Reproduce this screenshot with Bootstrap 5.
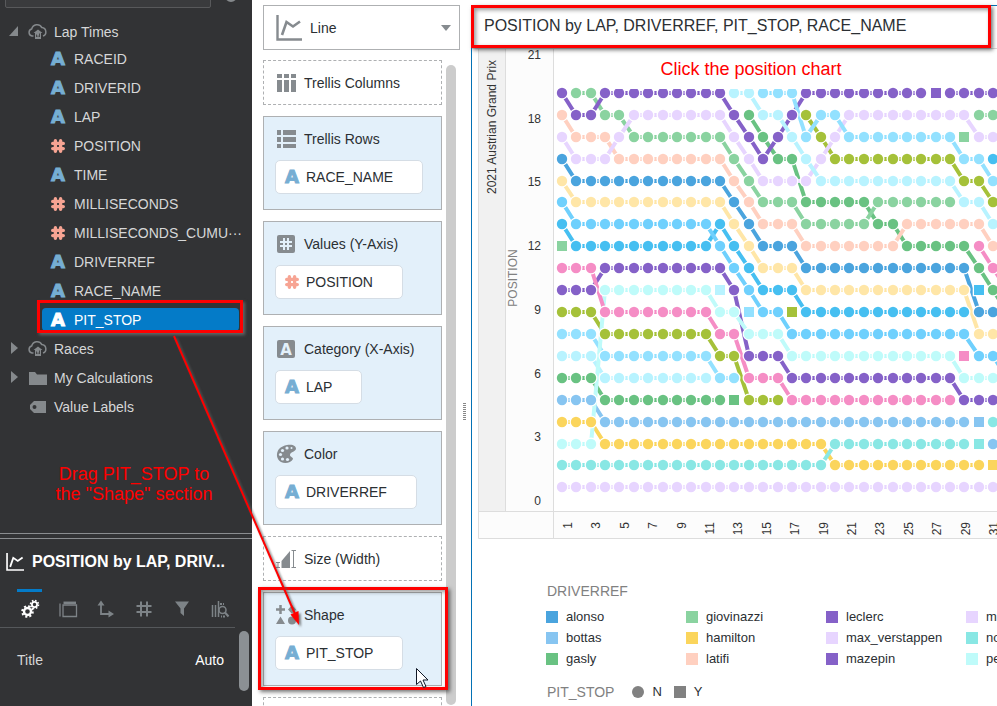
<!DOCTYPE html>
<html lang="en">
<head>
<meta charset="utf-8">
<meta name="viewport" content="width=device-width, initial-scale=1">
<title>POSITION by LAP</title>
<link href="https://cdn.jsdelivr.net/npm/bootstrap@5.3.0/dist/css/bootstrap.min.css" rel="stylesheet">
<style>
body{font-family:"Liberation Sans",Arial,sans-serif;font-size:14px;line-height:20px;color:#2b2f33;background:#fff}
.workbench{overflow:hidden}
.side{flex:0 0 252px;background:#323335;color:#d6d7d8}
.search-box{width:206px;height:32px;margin:-24px 0 11px 5px;background:#3a3b3d;border:1px solid #58595b;border-radius:2px;color:#ccc}
.search-mark{margin-left:14px}
.node{height:29px;width:100%;color:inherit;background:none;border:0;padding:0;text-align:left;white-space:nowrap}
.node-first{height:25px}
.node .twist{width:11px;height:13px;margin-left:9px;margin-right:8px}
.node .pic{width:20px;height:18px;margin-right:6px}
.leaf{padding-left:42px}
.leaf-body{width:197px;height:23px;padding-left:9px;border-radius:4px}
.leaf-body.picked{background:#047bc8;color:#fff}
.a-icon{font:bold 18px/18px "DejaVu Sans",sans-serif;color:#76aed3;width:14px;display:inline-block;flex-shrink:0;-webkit-text-stroke:1px currentColor}
.picked .a-icon{color:#fff}
.h-icon{width:14px;height:14px;color:#f7a493;flex-shrink:0}
.tag-gap{gap:9px}
.double-rule{height:6px;border-top:1px solid #8a8d90;border-bottom:1px solid #8a8d90}
.prop-title{font-size:16px;height:42px;color:#fff;padding:4px 0 0 6px;gap:8px}
.tabs{width:235px;height:47px;border-bottom:1px solid #55585b;padding-left:17px;gap:13px}
.tab-btn{width:25px;height:38px;background:none;border:0;border-top:3px solid transparent;padding:7px 0 0;color:#7d8387;margin-top:8px;display:flex;align-items:flex-start;justify-content:center}
.tab-btn.on{border-color:#047bc8;color:#fff}
.props{height:78px;padding:3px 3px 0 17px}
.prop-cell{padding-top:19px}
.side-bar{width:10px;height:60px;border-radius:5px;background:#8b9094;margin-left:15px}
.grammar{flex:0 0 211px;padding:5px 4px 0 11px}
.chart-type{height:45px;width:197px;border:1px solid #aeb0b2}
.chart-type svg{margin-left:12px;color:#868b8f}
.chart-type select{border:0;background:none;appearance:none;height:40px;padding-left:8px;color:#2b2f33}
.zone-area{margin-top:10px;gap:4px}
.zones{width:179px;gap:11px}
.zone{border:1px solid #aeb0b2;background:#e3f0fa;height:94px;padding:12px 0 0 11px;flex-shrink:0}
.zone-empty{border-style:dashed;background:#fff;height:45px}
.zone-head{height:20px;gap:8px;padding-left:1px;color:#2b2f33}
.zone-head svg{width:20px;height:20px;color:#868b8f}
.chip{height:34px;background:#fff;border:1px solid #d5dde5;border-radius:5px;margin-top:11px;padding:0 29px 0 9px;gap:7px;color:#2b2f33}
.mid-bar{width:10px;height:640px;border-radius:5px;background:#ccc;margin-top:5px}
.splitter{flex:0 0 8px;padding-top:117px}
.grip{width:3px;height:18px;margin-left:-1px;background:repeating-linear-gradient(#888 0 1px,transparent 1px 2px)}
.canvas{margin-top:5px;border-left:1px solid #0572b5;border-top:1px solid #0572b5;margin-left:-1px}
.canvas-head{height:43px;padding:0 0 2px 12px;border-bottom:1px solid #d8d8d8;font-size:16px;flex-shrink:0}
.plot{display:block;width:100%;height:492px;font-size:12px}
.legend{padding:40px 0 0 75px;font-size:13px;color:#2b2f33}
.legend-name{color:#818181;font-size:14px;margin:0 0 6px}
.keys{display:grid;grid-template-columns:repeat(4,140px);row-gap:1px;margin-left:-1px}
.swatch{width:12px;height:12px;margin-right:8px}
.shape-keys{margin-top:13px}
.shape-keys svg{width:12px;height:12px;margin:0 8px 0 12px}
.shape-keys .legend-name{margin:0 6px 0 0}
.note{position:absolute;color:#f00;font-size:18px;line-height:20px;text-align:center}
.frame{position:absolute;border:3px solid #f00;box-shadow:2px 2px 4px rgba(0,0,0,.55),inset 2px 2px 4px rgba(0,0,0,.4);pointer-events:none}
.frame-field{left:37px;top:300px;width:206px;height:33px;box-shadow:2px 2px 3px #666}
.frame-shape{left:258px;top:587px;width:190px;height:103px}
.frame-title{left:471px;top:5px;width:520px;height:43px}
.note-drag{left:54px;top:464px;width:160px}
.note-click{left:613px;top:49px;width:276px;height:40px;padding-top:10px;background:#fff}
.pointer-art{position:absolute;left:0;top:0;pointer-events:none}
.drag-line{filter:drop-shadow(2px 2px 1px rgba(90,90,90,.8))}
</style>
<script src="https://cdn.jsdelivr.net/npm/bootstrap@5.3.0/dist/js/bootstrap.bundle.min.js"></script>
</head>
<body>
<svg width="0" height="0" class="position-absolute" aria-hidden="true">
 <symbol id="hash" viewBox="0 0 14 14"><path d="M4.4 1.7V12.3M9.6 1.7V12.3M1.7 4.4H12.3M1.7 9.6H12.3" stroke="currentColor" stroke-width="3.4" stroke-linecap="round"/></symbol>
 <symbol id="cloud" viewBox="0 0 20 18"><path d="M5.5 13H4a3.6 3.6 0 0 1-.3-7A5.5 5.5 0 0 1 13.800 4.500A4.400 4.400 0 0 1 15 13" fill="none" stroke="#85898c" stroke-width="1.500"/><path d="M10 6.500L5.500 10H7V16H13V10H14.500Z" fill="#85898c"/><path d="M8.500 14V11.500M10 14V12.500M11.500 14V10.500" stroke="#323335" stroke-width=".8"/></symbol>
 <symbol id="linechart" viewBox="0 0 26 26"><path d="M1.500 0V24.500H26" fill="none" stroke="currentColor" stroke-width="2.400"/><path d="M6 20L10.500 7L17 11.500L24 6.500" fill="none" stroke="currentColor" stroke-width="2.600"/></symbol>
</svg>

<div class="workbench position-relative vh-100 d-flex">
 <aside class="side d-flex flex-column">
  <div class="flex-grow-1">
   <div class="d-flex"><input class="search-box" type="text" aria-label="Search">
    <svg class="search-mark" width="12" height="3" aria-hidden="true"><circle cx="6" cy="-4" r="5" fill="none" stroke="#85898c" stroke-width="2"/></svg></div>
   <div id="tree"></div>
  </div>
  <section>
   <div class="double-rule"></div>
   <h2 class="prop-title d-flex align-items-center fw-bold m-0"><svg width="18" height="18"><use href="#linechart"/></svg>POSITION by LAP, DRIV...</h2>
   <div class="tabs d-flex align-items-start">
    <button class="tab-btn on" aria-label="General"><svg width="20" height="20" viewBox="0 0 20 20" fill="none" stroke="currentColor"><circle cx="7.500" cy="12.500" r="3.500" stroke-width="2.400"/><circle cx="7.500" cy="12.500" r="5.300" stroke-width="2" stroke-dasharray="2.080 2.080"/><circle cx="14.500" cy="5.500" r="2.600" stroke-width="1.800"/><circle cx="14.500" cy="5.500" r="4" stroke-width="1.600" stroke-dasharray="1.570 1.570"/></svg></button>
    <button class="tab-btn" aria-label="Canvas"><svg width="20" height="20" viewBox="0 0 20 20" fill="none" stroke="currentColor" stroke-width="1.300"><path d="M5 6V17.500H18.500V6ZM2 4.500V17.500"/><path d="M5.500 3.800H18" stroke-width="2.500"/></svg></button>
    <button class="tab-btn" aria-label="Axis"><svg width="20" height="20" viewBox="0 0 20 20"><path d="M5 5V15H14" fill="none" stroke="currentColor" stroke-width="1.800"/><path d="M1.500 6.500L5 1.500L8.500 6.500ZM12.500 11.500L18 15L12.500 18.500Z" fill="currentColor"/></svg></button>
    <button class="tab-btn" aria-label="Values"><svg width="20" height="20" viewBox="0 0 20 20"><path d="M7 2.500V17.500M13 2.500V17.500M2.500 7H17.500M2.500 13H17.500" stroke="currentColor" stroke-width="2"/></svg></button>
    <button class="tab-btn" aria-label="Filters"><svg width="20" height="20" viewBox="0 0 20 20"><path d="M3 2.500H17L12 9.500V17L8.500 14V9.500Z" fill="currentColor"/></svg></button>
    <button class="tab-btn" aria-label="Analytics"><svg width="20" height="20" viewBox="0 0 20 20" fill="none" stroke="currentColor"><path d="M2.500 6V18M5.500 6V18M8.500 2V18" stroke-width="1.500"/><path d="M10 5H14M15 17.500H11" stroke-dasharray="2 1" stroke-width="2"/><circle cx="12.500" cy="11" r="3.500" stroke-width="1.500"/><path d="M15 13.500L18.500 17.500" stroke-width="2"/></svg></button>
   </div>
   <div class="props d-flex align-items-start">
    <span class="prop-cell flex-grow-1">Title</span><span class="prop-cell text-white">Auto</span><span class="side-bar"></span>
   </div>
  </section>
 </aside>

 <section class="grammar">
  <div class="chart-type d-flex align-items-center">
   <svg width="26" height="26"><use href="#linechart"/></svg>
   <select class="flex-grow-1" aria-label="Chart type"><option>Line</option></select>
   <svg width="10" height="6" class="me-2 pe-none"><path d="M0 0H10L5 6Z" fill="#868b8f"/></svg>
  </div>
  <div class="zone-area d-flex">
   <div class="zones d-flex flex-column" id="zones"></div>
   <div class="mid-bar"></div>
  </div>
 </section>
 <div class="splitter d-flex align-items-center"><span class="grip"></span></div>

 <main class="canvas flex-grow-1 d-flex flex-column overflow-hidden">
  <h1 class="canvas-head d-flex align-items-center m-0">POSITION by LAP, DRIVERREF, PIT_STOP, RACE_NAME</h1>
  <svg class="plot flex-shrink-0" id="plot" role="img" aria-label="Position by lap"></svg>
  <div class="legend">
   <p class="legend-name">DRIVERREF</p>
   <div class="keys" id="keys"></div>
   <div class="shape-keys d-flex align-items-center"><span class="legend-name">PIT_STOP</span>
    <svg><circle cx="6" cy="6" r="6" fill="#818181"/></svg>N
    <svg><path d="M0 0H12V12H0Z" fill="#818181"/></svg>Y</div>
  </div>
 </main>

 <div class="note note-click">Click the position chart</div>
 <div class="note note-drag">Drag PIT_STOP to<br>the "Shape" section</div>
 <div class="frame frame-field"></div><div class="frame frame-shape"></div><div class="frame frame-title"></div>
 <svg class="pointer-art" width="460" height="700" aria-hidden="true">
  <g class="drag-line"><path d="M174 336L295 614" stroke="#f00" stroke-width="2"/><path d="M299 625L290.500 614.500L298.500 611Z" fill="#f00"/></g>
  <path d="M416.500 668.500V684.500L420.500 681L423.500 687.500L426 686.500L423 680H428Z" fill="#fff" stroke="#111827"/>
 </svg>
</div>

<script>
const A='<span class="a-icon" aria-hidden="true">A</span>', H='<svg class="h-icon" aria-hidden="true"><use href="#hash"/></svg>';
const cloud='<svg class="pic"><use href="#cloud"/></svg>';
const opened='<svg class="twist"><path d="M0 11H9V1Z" fill="#85898c"/></svg>';
const shut='<svg class="twist"><path d="M2 0L9 6L2 12Z" fill="#85898c"/></svg>';
const branch=(t,pic,label,c='')=>`<button class="node d-flex align-items-center ${c}">${t}${pic}${label}</button>`;
const leaf=(i,label)=>`<button class="node leaf d-flex align-items-center"><span class="leaf-body tag-gap d-flex align-items-center ${label=='PIT_STOP'?'picked':''}">${i}${label}</span></button>`;
document.getElementById('tree').innerHTML=
 branch(opened,cloud,'Lap Times','node-first')+
 [[A,'RACEID'],[A,'DRIVERID'],[A,'LAP'],[H,'POSITION'],[A,'TIME'],[H,'MILLISECONDS'],[H,'MILLISECONDS_CUMU···'],[A,'DRIVERREF'],[A,'RACE_NAME'],[A,'PIT_STOP']].map(r=>leaf(...r)).join('')+
 branch(shut,cloud,'Races')+
 branch(shut,'<svg class="pic"><path d="M1 3H7L9 5.500H19V16H1Z" fill="#85898c"/></svg>','My Calculations')+
 branch('<span class="twist"></span>','<svg class="pic"><path fill-rule="evenodd" d="M6 3H18V15H6L2 11V7ZM6.500 7A2 2 0 1 0 6.500 11A2 2 0 1 0 6.500 7Z" fill="#85898c"/></svg>','Value Labels');

const zi={
 cols:'<path d="M1 1h5v4H1zM8 1h5v4H8zM15 1h5v4h-5zM1 7h5v12H1zM8 7h5v12H8zM15 7h5v12h-5z" fill="currentColor"/>',
 rows:'<path d="M1 1h4v5H1zM7 1h13v5H7zM1 8h4v5H1zM7 8h13v5H7zM1 15h4v4H1zM7 15h13v4H7z" fill="currentColor"/>',
 val:'<rect x="1" y="1" width="18" height="18" rx="2" fill="currentColor"/><path d="M8 4v12M12 4v12M4 8h12M4 12h12" stroke="#e3f0fa" stroke-width="2"/>',
 cat:'<rect x="1" y="1" width="18" height="18" rx="2" fill="currentColor"/><text x="10" y="15.500" text-anchor="middle" font-family="DejaVu Sans" font-weight="bold" font-size="15" fill="#e3f0fa">A</text>',
 color:'<path d="M11 1C17 0 20 2 20 5C19 8 14 8 14 11C14 13 17 13 17 15C15 19 9 20 5 18C0 15 0 9 3 5C5 3 8 1.500 11 1Z" fill="currentColor"/><g fill="#e3f0fa"><circle cx="11" cy="4" r="1.600"/><circle cx="6.500" cy="6.500" r="1.600"/><circle cx="4.500" cy="10.500" r="1.600"/><circle cx="6.500" cy="15" r="1.600"/><circle cx="11.500" cy="15.500" r="1.600"/><circle cx="15.500" cy="4" r="1"/></g>',
 size:'<path d="M5.500 19V12L14 2V19Z" fill="currentColor"/><path d="M0 13.500H4M2 13.500V18.500M0 18.500H4M15.500 1.500H20M17.500 1.500V18.500M15.500 18.500H20" stroke="currentColor"/>',
 shape:'<path d="M4.500 0V9M0 4.500H9" stroke="currentColor" stroke-width="2.500"/><path d="M16 0L20 4.500L16 9L12 4.500ZM4.500 11.500L9 19H0Z" fill="currentColor"/><circle cx="16" cy="15.500" r="4" fill="currentColor"/>'};
document.getElementById('zones').innerHTML=[
 ['cols','Trellis Columns'],['rows','Trellis Rows',A,'RACE_NAME'],['val','Values (Y-Axis)',H,'POSITION'],['cat','Category (X-Axis)',A,'LAP'],
 ['color','Color',A,'DRIVERREF'],['size','Size (Width)'],['shape','Shape',A,'PIT_STOP'],['','']
].map(([k,t,i,c])=>`<div class="zone ${c?'':'zone-empty'}"><div class="zone-head d-flex align-items-center">${k?`<svg viewBox="0 0 20 20">${zi[k]}</svg>`:''}${t}</div>${c?`<button class="chip d-inline-flex align-items-center">${i}${c}</button>`:''}</div>`).join('');

document.getElementById('keys').innerHTML=[
 ['alonso','#4aa4de'],['giovinazzi','#8ad3a0'],['leclerc','#8561c8'],['mick_schumacher','#e7d5ff'],
 ['bottas','#87c5f1'],['hamilton','#fbd55c'],['max_verstappen','#e7d5ff'],['norris','#89e7e4'],
 ['gasly','#69c282'],['latifi','#ffd0c0'],['mazepin','#8561c8'],['perez','#bffbfa']
].map(([n,c])=>`<span class="d-flex align-items-center"><svg class="swatch"><path d="M0 0H12V12H0Z" fill="${c}"/></svg>${n}</span>`).join('');

/* Each run is "firstLap-lastLap:position"; "s" marks a pit-stop lap, which breaks the line. */
const series=[
 ['#e7d5ff','1-31:1'],
 ['#fbd55c','1-3:4 4-19:3 20-30:2 s31:2'],
 ['#89e7e4','1-19:2 20-29:3 s30:3 31:4'],
 ['#87c5f1','1-3:5 4-29:4 s30:4 31:3'],
 ['#69c282','1-3:6 4-12:5 s13:5 14:18 15:17 16-17:16 18-22:14 23-24:13 25-29:12 30:11 31:10 32:9'],
 ['#8561c8','1-3:10 4-12:11 13:10 14-16:7 17-28:6 29-31:5'],
 ['#a5c139','1-3:9 4-11:8 12-13:7 14-16:5 s17:9 18:18 19:17 20-28:16 29-30:15 31:14'],
 ['#ffd0c0','1:18 2-4:17 5-12:16 13:15 14:14 15-17:13 18-24:12 25-30:13 31:12'],
 ['#8ad3a0','s1:12 2-3:19 4-5:18 6-12:17 13:16 14:15 15-17:14 18-22:13 23-28:14 s29:17 30-31:18'],
 ['#e7d5ff','1:17 2-4:16 5:17 6-12:18 13:17 14:16 15-18:15 19:16 20:17 21-29:18 30-31:17'],
 ['#8561c8','1:19 2-3:18 4-12:19 13:18 14:17 15:16 16:17 17:18 18-26:19 s27:19 28-31:19'],
 ['#b8f3ff','1-3:7 4-11:6 s12:10 13-14:19 15-16:18 17:17 18:16 19-28:15 29-30:14 31:13'],
 ['#93e1ff','1-3:8 4-11:7 12-13:6 s14:9 15-17:19 18:17 19-20:18 21-28:17 29-30:16 31:15'],
 ['#bffbfa','1-3:3 4-11:10 12-13:9 14-16:8 17-28:7 29-31:6'],
 ['#f58dc5','1-3:11 4-11:9 12-13:8 14-16:6 17-28:5 s29:7 30:12 31:11 32:10'],
 ['#46bff1','1:13 2-11:12 12:13 13:12 14:11 15-17:10 18-29:9 s30:10 31:16'],
 ['#6fd0fd','1:14 2-11:13 12:12 13:11 14:10 15-16:9 17-29:8 30-31:7 32:6'],
 ['#4aa4de','1:16 2-12:15 13:14 14:13 15-17:12 18-29:11 30-31:9'],
 ['#ffe6a7','1:15 2-12:14 13:13 14:12 15-17:11 18-29:10 30-31:8']];
const X=l=>Math.round(90+(l-1)*14.37), Y=p=>Math.round(438.4-(p-1)*21.92);
let lines='',dots='';
for(const [c,runs] of series){
 let pts=[];
 const flush=()=>{if(pts.length>1)lines+=`<polyline points="${pts.join(' ')}" stroke="${c}"/>`;pts=[];};
 for(const r of runs.split(' ')){
  const m=r.match(/(s?)(\d+)-?(\d*):(\d+)/);
  for(let l=+m[2];l<=+(m[3]||m[2]);l++){
   const x=X(l),y=Y(+m[4]);
   if(m[1]){flush();dots+=`<rect x="${x-5}" y="${y-5}" width="10" height="10" fill="${c}"/>`;}
   else{pts.push(x+','+y);dots+=`<circle cx="${x}" cy="${y}" r="5.200" fill="${c}"/>`;}
  }
 }
 flush();
}
let axis='';
for(let v=0;v<=21;v+=3)axis+=`<text x="69" y="${Math.round(456-v*21.25)}" text-anchor="end">${v}</text>`;
for(let l=1;l<=31;l+=2)axis+=`<text text-anchor="end" transform="translate(${Math.round(100+(l-1)*14.2)} 473) rotate(-90)">${l}</text>`;
document.getElementById('plot').innerHTML=`
 <rect x="6" y="0" width="27" height="462" fill="#f1f1f1"/><rect x="34" y="0" width="48" height="462" fill="#fcfcfc"/><rect x="6" y="462" width="100%" height="27" fill="#fcfcfc"/>
 <path d="M6.500 0V489.500H2000M6.500 462.500H2000M33.500 0V462M81.500 0V489" fill="none" stroke="#ddd"/>
 <g fill="#333">${axis}<text text-anchor="middle" transform="translate(24 78) rotate(-90)">2021 Austrian Grand Prix</text></g>
 <text fill="#818181" text-anchor="middle" transform="translate(45 229) rotate(-90)">POSITION</text>
 <g fill="none" stroke-width="4">${lines}</g><g stroke="#fff" stroke-width="2.600" paint-order="stroke">${dots}</g>`;
</script>
</body>
</html>
